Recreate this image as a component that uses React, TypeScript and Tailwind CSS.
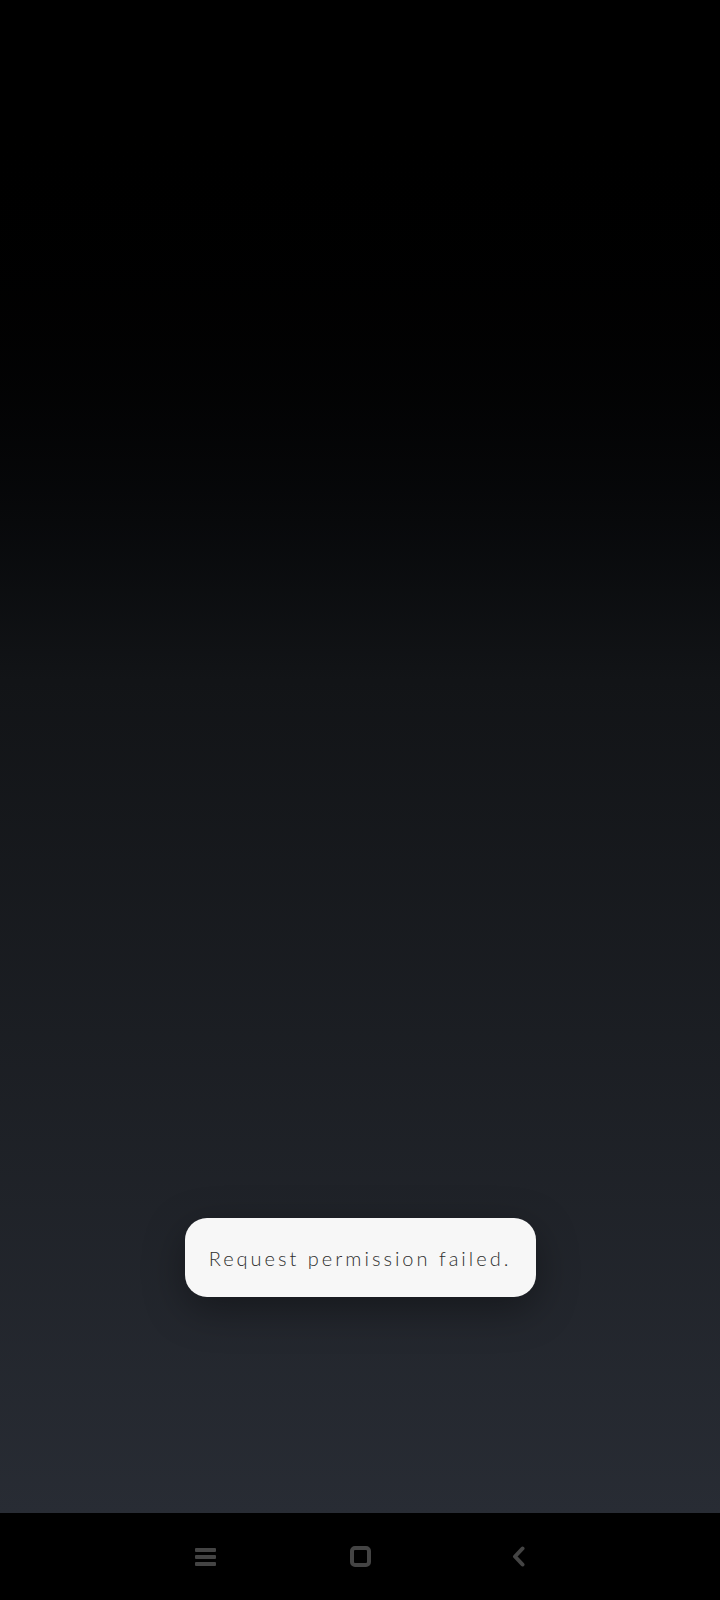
export default function App() {
  return (
    <main className="flex h-[1600px] w-full flex-col bg-black font-['Lato','Liberation_Sans',sans-serif]">
      {/* Screen content */}
      <div className="flex flex-1 flex-col items-center justify-end bg-gradient-to-b from-black from-[6%] via-[#121417] via-[45%] to-[#282c34] pb-[216px]">
        {/* Toast */}
        <div className="flex h-[79px] w-[351px] items-center justify-center rounded-[22px] bg-[#f7f7f7] shadow-[0_12px_40px_rgba(0,0,0,0.35)]">
          <span className="text-[20px] font-light tracking-[3px] text-[#2e2e2e]">
            Request permission failed.
          </span>
        </div>
      </div>

      {/* Navigation bar */}
      <nav className="flex h-[87px] items-center justify-center bg-black pl-[6px]">
        <div className="flex w-[155px] justify-center">
          <div className="flex h-[18px] w-[21px] flex-col justify-between">
            <span className="h-[4px] w-full rounded-[1px] bg-[#444]" />
            <span className="h-[4px] w-full rounded-[1px] bg-[#444]" />
            <span className="h-[4px] w-full rounded-[1px] bg-[#444]" />
          </div>
        </div>
        <div className="flex w-[155px] justify-center">
          <div className="h-[21px] w-[21px] rounded-[5px] border-[4px] border-[#444]" />
        </div>
        <div className="flex w-[160px] justify-center">
          <svg width="13" height="21" viewBox="0 0 13 21" fill="none">
            <polyline
              points="10.5,2.5 3,10.5 10.5,18.5"
              stroke="#444"
              strokeWidth="4"
              strokeLinecap="round"
              strokeLinejoin="round"
            />
          </svg>
        </div>
      </nav>
    </main>
  )
}
